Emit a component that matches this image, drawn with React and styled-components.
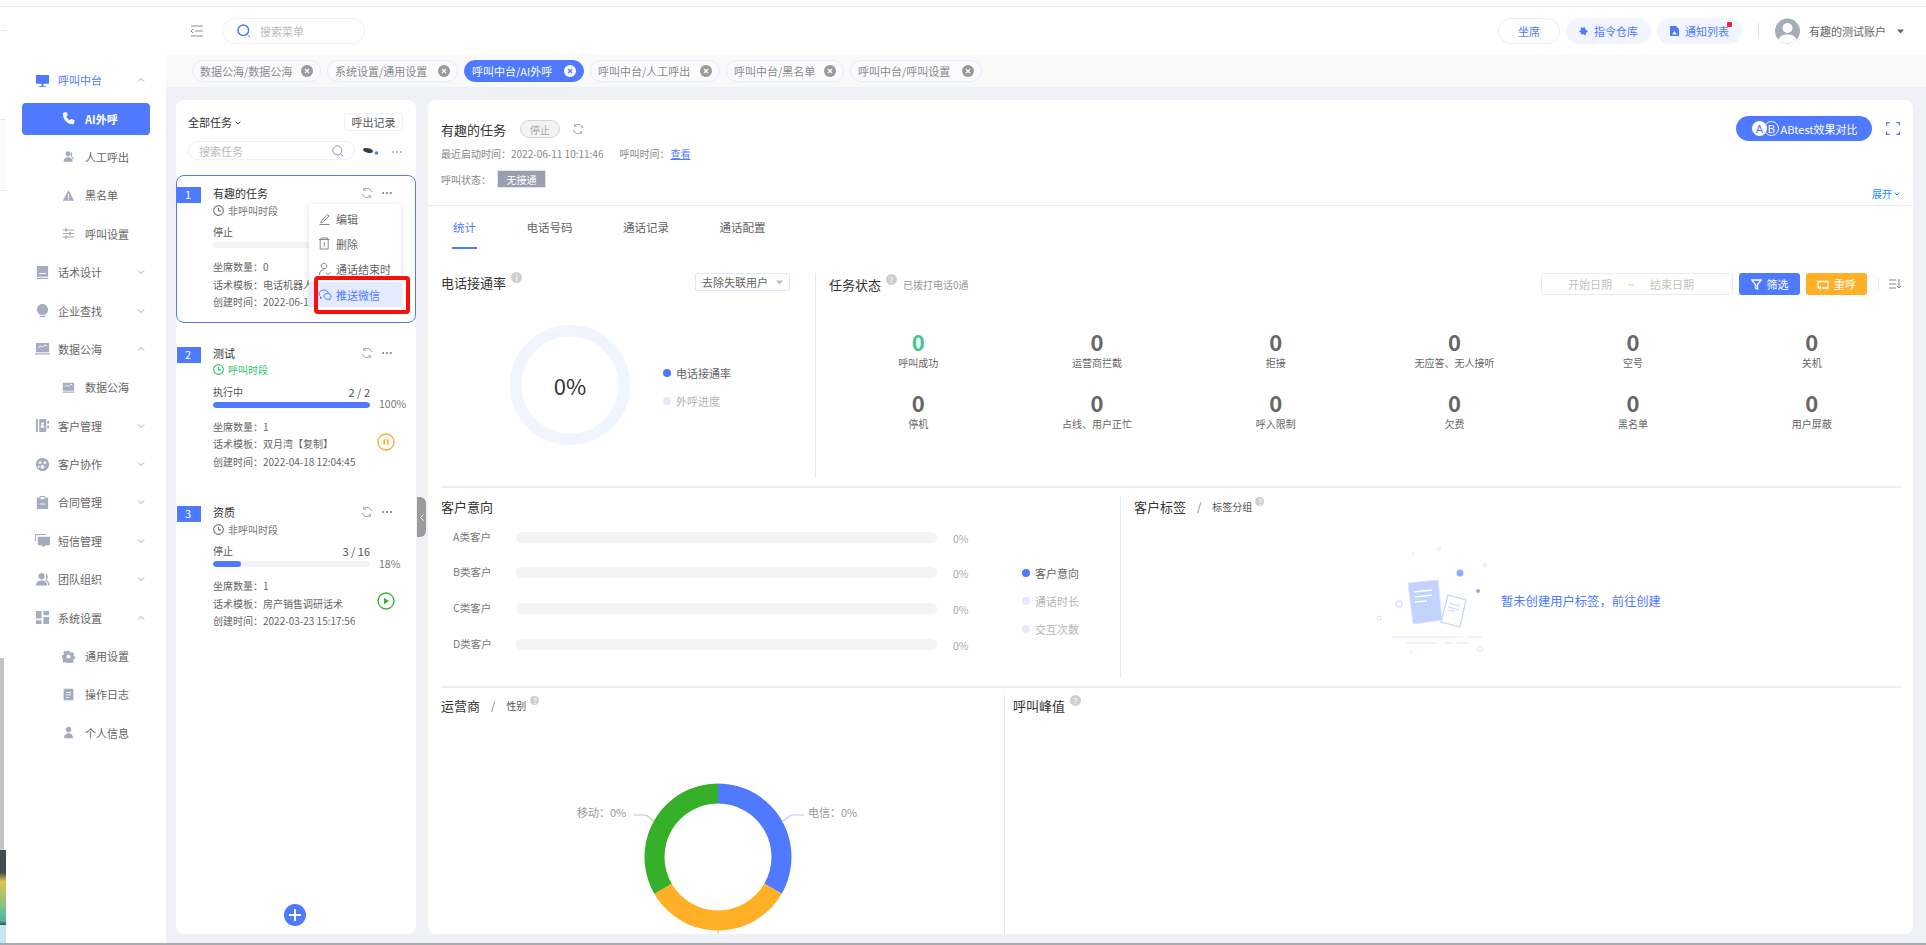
import React from 'react';
import styled, { createGlobalStyle } from 'styled-components';

const BLUE = '#4f7aff';

const GlobalStyle = createGlobalStyle`
    html, body, #root {
        margin: 0;
        padding: 0;
        height: 100%;
    }
    body {
        font-family: "Noto Sans CJK SC", "Noto Sans", "Liberation Sans", sans-serif;
        color: #555;
        background: #fff;
        overflow: hidden;
    }
    * {
        box-sizing: border-box;
    }
`;

const Page = styled.div`
    display: flex;
    flex-direction: column;
    width: 1926px;
    height: 945px;
    overflow: hidden;
`;

const TopEdge = styled.div`
    flex: none;
    height: 7px;
    border-bottom: 1px solid #e6e6e6;
`;

const BottomEdge = styled.div`
    flex: none;
    height: 2px;
    background: #a9adb3;
`;

const Body = styled.div`
    flex: 1;
    display: flex;
    min-height: 0;
`;

const LeftEdge = styled.div`
    flex: none;
    width: 6px;
    display: flex;
    flex-direction: column;
`;

const EdgePiece = styled.div`
    flex: ${(p) => (p.$h ? 'none' : '1')};
    height: ${(p) => (p.$h ? `${p.$h}px` : 'auto')};
    background: ${(p) => p.$bg || '#fff'};
    border-bottom: ${(p) => (p.$line ? '1px solid #e9e9e9' : '0')};
    margin-right: ${(p) => (p.$thin ? '2px' : '0')};
`;

const Sidebar = styled.aside`
    flex: none;
    width: 160px;
    padding-top: 54px;
    background: #fff;
`;

const NavRow = styled.div`
    display: flex;
    align-items: center;
    height: 38.4px;
    padding-left: ${(p) => (p.$sub ? '56px' : '29px')};
    padding-right: 21px;
    font-size: 11px;
    color: ${(p) => (p.$on ? BLUE : '#666')};
    svg.nav-icon {
        flex: none;
        width: ${(p) => (p.$sub ? '13px' : '15px')};
        height: ${(p) => (p.$sub ? '13px' : '15px')};
        margin-right: ${(p) => (p.$sub ? '10px' : '8px')};
    }
`;

const ActiveRow = styled.div`
    display: flex;
    align-items: center;
    height: 32px;
    margin: 3.6px 16px 2.8px;
    padding-left: 39px;
    background: ${BLUE};
    border-radius: 4px;
    color: #fff;
    font-size: 11px;
    font-weight: 700;
    svg {
        width: 15px;
        height: 15px;
        margin-right: 9px;
    }
`;

const Chevron = styled.svg`
    margin-left: auto;
    width: 8px;
    height: 6px;
`;

const Workspace = styled.div`
    flex: 1;
    min-width: 0;
    display: flex;
    flex-direction: column;
`;

const Header = styled.header`
    flex: none;
    height: 48px;
    display: flex;
    align-items: center;
    padding: 0 22px 0 24px;
    background: #fff;
`;

const MenuSearch = styled.div`
    display: flex;
    align-items: center;
    width: 143px;
    height: 26px;
    margin-left: 18px;
    padding-left: 14px;
    border: 1px solid #eef1fb;
    border-radius: 13px;
    font-size: 11px;
    color: #bbb;
    svg {
        margin-right: 9px;
    }
`;

const HeaderRight = styled.div`
    margin-left: auto;
    display: flex;
    align-items: center;
`;

const PillButton = styled.div`
    position: relative;
    display: flex;
    align-items: center;
    justify-content: center;
    gap: 6px;
    width: ${(p) => p.$w}px;
    height: 26px;
    margin-left: 6px;
    border-radius: 13px;
    font-size: 11px;
    color: ${BLUE};
    background: ${(p) => (p.$outline ? '#fff' : '#f2f5ff')};
    border: ${(p) => (p.$outline ? '1px solid #e6ecfb' : '0')};
`;

const RedDot = styled.span`
    position: absolute;
    top: 4px;
    right: 10px;
    width: 5px;
    height: 5px;
    border-radius: 1px;
    background: #ff1f3d;
`;

const HeaderDivider = styled.div`
    width: 1px;
    height: 16px;
    margin: 0 16px;
    background: #e2e2e2;
`;

const Account = styled.div`
    display: flex;
    align-items: center;
    font-size: 11px;
    color: #666;
    span {
        margin: 0 11px 0 9px;
    }
`;

const TabStrip = styled.nav`
    flex: none;
    height: 32px;
    display: flex;
    align-items: center;
    gap: 6px;
    padding-left: 26px;
    background: #f9f9fa;
`;

const PageTab = styled.div`
    display: flex;
    align-items: center;
    justify-content: space-between;
    width: ${(p) => p.$w}px;
    height: 22px;
    padding: 0 7px;
    border-radius: 11px;
    font-size: 11px;
    white-space: nowrap;
    color: ${(p) => (p.$on ? '#fff' : '#8a8a8a')};
    background: ${(p) => (p.$on ? BLUE : '#fbfbfd')};
    border: 1px solid ${(p) => (p.$on ? BLUE : '#e6ecfb')};
`;

const Content = styled.main`
    flex: 1;
    min-height: 0;
    display: flex;
    gap: 12px;
    padding: 13px 13px 9px 10px;
    background: #f0f1f6;
`;

const TaskPanel = styled.section`
    position: relative;
    flex: none;
    width: 240px;
    padding-top: 13px;
    background: #fff;
    border-radius: 8px;
`;

const PanelTop = styled.div`
    display: flex;
    align-items: center;
    justify-content: space-between;
    height: 18px;
    padding: 0 13px 0 12px;
    font-size: 11px;
    color: #333;
    svg {
        margin-left: 3px;
        vertical-align: 2px;
    }
`;

const OutlineButton = styled.div`
    display: flex;
    align-items: center;
    justify-content: center;
    width: 59px;
    height: 18px;
    border: 1px solid #eef1fb;
    border-radius: 3px;
    font-size: 11px;
    color: #555;
`;

const SearchRow = styled.div`
    display: flex;
    align-items: center;
    height: 19px;
    margin-top: 10px;
    padding: 0 14px 0 12px;
`;

const TaskSearch = styled.div`
    display: flex;
    align-items: center;
    justify-content: space-between;
    width: 167px;
    height: 19px;
    padding: 0 10px;
    border: 1px solid #eef1fb;
    border-radius: 10px;
    font-size: 11px;
    color: #bbb;
`;

const CardList = styled.div`
    display: flex;
    flex-direction: column;
    gap: 12px;
    margin-top: 15px;
`;

const Card = styled.article`
    position: relative;
    display: flex;
    align-items: flex-start;
    height: 147.5px;
    padding-top: 10px;
    border: 1px solid ${(p) => (p.$on ? BLUE : 'transparent')};
    border-radius: 8px;
`;

const Badge = styled.div`
    flex: none;
    width: 24px;
    height: 16px;
    margin-top: 1px;
    padding-left: 8px;
    background: ${BLUE};
    color: #fff;
    font-size: 11px;
    line-height: 15px;
`;

const CardBody = styled.div`
    flex: 1;
    min-width: 0;
    margin-left: 12px;
    padding-right: 23px;
`;

const CardTitle = styled.div`
    display: flex;
    align-items: center;
    height: 14px;
    font-size: 11px;
    color: #333;
`;

const CardTools = styled.div`
    margin-left: auto;
    display: flex;
    align-items: center;
    gap: 9px;
`;

const Period = styled.div`
    display: flex;
    align-items: center;
    gap: 4px;
    height: 14px;
    margin-top: 3px;
    font-size: 10px;
    color: ${(p) => (p.$on ? '#30c46f' : '#777')};
`;

const ProgressHead = styled.div`
    display: flex;
    justify-content: space-between;
    width: 157px;
    height: 14px;
    margin-top: 8px;
    font-size: 10px;
    line-height: 14px;
    color: #555;
    em {
        font-style: normal;
        font-size: 11px;
    }
`;

const ProgressRow = styled.div`
    display: flex;
    align-items: center;
    height: 6px;
    margin-top: 3px;
    white-space: nowrap;
    font-size: 10.5px;
    color: #777;
`;

const Track = styled.div`
    flex: none;
    width: 157px;
    height: 6px;
    border-radius: 3px;
    background: #f3f3f3;
    overflow: hidden;
`;

const Fill = styled.div`
    height: 100%;
    border-radius: 3px;
    background: ${BLUE};
`;

const Percent = styled.span`
    margin: -2px 0 0 9px;
`;

const InfoRow = styled.div`
    display: flex;
    justify-content: space-between;
    margin: 10px -3px 0 0;
`;

const InfoLines = styled.div`
    max-width: ${(p) => (p.$clip ? '96px' : 'none')};
    overflow: hidden;
    font-size: 10px;
    line-height: 17.5px;
    color: #666;
    white-space: nowrap;
`;

const RoundAction = styled.div`
    flex: none;
    margin-top: 14px;
    height: 18px;
`;

const Menu = styled.div`
    position: absolute;
    left: 132px;
    top: 28px;
    width: 92px;
    height: 106px;
    padding-top: 2px;
    background: #fff;
    border-radius: 2px;
    box-shadow: 0 1px 6px rgba(60, 70, 100, 0.16);
`;

const MenuItem = styled.div`
    position: relative;
    display: flex;
    align-items: center;
    gap: 4px;
    height: 25.3px;
    padding-left: 9px;
    font-size: 11px;
    white-space: nowrap;
    color: ${(p) => (p.$on ? BLUE : '#666')};
    background: ${(p) => (p.$on ? '#e4ebfe' : 'transparent')};
`;

const RedBox = styled.div`
    position: absolute;
    left: 5px;
    right: -9px;
    top: -6px;
    bottom: -7px;
    border: 4px solid #fa0d0d;
    border-radius: 4px;
`;

const AddButton = styled.div`
    position: absolute;
    left: 108px;
    bottom: 8px;
    width: 22px;
    height: 22px;
    border-radius: 50%;
    background: ${BLUE};
    display: flex;
    align-items: center;
    justify-content: center;
`;

const CollapseHandle = styled.div`
    position: absolute;
    right: -10px;
    top: 397px;
    width: 9px;
    height: 40px;
    background: #9b9b9b;
    border-radius: 0 6px 6px 0;
    display: flex;
    align-items: center;
    justify-content: center;
`;

const MainPanel = styled.section`
    flex: 1;
    min-width: 0;
    background: #fff;
    border-radius: 8px;
    overflow: hidden;
`;

const TaskHead = styled.div`
    display: flex;
    justify-content: space-between;
    height: 106px;
    padding: 16px 13px 4px;
    border-bottom: 1px solid #ebebeb;
`;

const TaskMeta = styled.div`
    padding-top: 4px;
`;

const MetaTitle = styled.div`
    display: flex;
    align-items: center;
    height: 18px;
    font-size: 13px;
    color: #333;
`;

const StopPill = styled.span`
    display: flex;
    align-items: center;
    justify-content: center;
    width: 40px;
    height: 18px;
    margin: 0 12px 0 14px;
    border: 1px solid #d4d4d4;
    border-radius: 9px;
    background: #f3f3f3;
    font-size: 10px;
    color: #aaa;
`;

const MetaLine = styled.div`
    display: flex;
    align-items: center;
    margin-top: ${(p) => p.$mt}px;
    height: ${(p) => p.$h}px;
    font-size: 10px;
    color: #888;
    a {
        margin-left: 1px;
        color: ${BLUE};
        text-decoration: underline;
    }
    b {
        margin-left: 16px;
        font-weight: 400;
    }
`;

const StateTag = styled.span`
    display: flex;
    align-items: center;
    justify-content: center;
    width: 49px;
    height: 18px;
    margin-left: 6px;
    background: #9a9fb0;
    border: 1px solid #e5e5e5;
    font-size: 10px;
    color: #fff;
`;

const HeadRight = styled.div`
    display: flex;
    flex-direction: column;
    align-items: flex-end;
    justify-content: space-between;
`;

const AbRow = styled.div`
    display: flex;
    align-items: center;
    gap: 14px;
`;

const AbButton = styled.div`
    display: flex;
    align-items: center;
    justify-content: center;
    gap: 1px;
    width: 136px;
    height: 25px;
    border-radius: 13px;
    background: ${BLUE};
    color: #fff;
    font-size: 11px;
`;

const ExpandLink = styled.div`
    display: flex;
    align-items: center;
    gap: 2px;
    font-size: 10px;
    line-height: 14px;
    color: #1890ff;
`;

const Tabs = styled.div`
    display: flex;
    gap: 48.5px;
    height: 43px;
    padding-left: 24px;
`;

const TabItem = styled.div`
    height: 43px;
    padding: 14px 1px 0;
    font-size: 11.5px;
    line-height: 14px;
    color: ${(p) => (p.$on ? BLUE : '#666')};
    border-bottom: 2px solid ${(p) => (p.$on ? BLUE : 'transparent')};
`;

const Band = styled.div`
    display: flex;
    height: ${(p) => p.$h}px;
    padding-top: ${(p) => p.$pt}px;
    padding-bottom: ${(p) => p.$pb}px;
    margin: 0 12px 0 13px;
    border-bottom: ${(p) => (p.$last ? '0' : '2px solid #eceef0')};
`;

const Column = styled.div`
    flex: ${(p) => (p.$w ? 'none' : '1')};
    width: ${(p) => (p.$w ? `${p.$w}px` : 'auto')};
    min-width: 0;
    padding-left: ${(p) => p.$pl || 0}px;
    padding-right: ${(p) => p.$pr || 0}px;
    border-right: ${(p) => (p.$line ? '1px solid #e8e8e8' : '0')};
`;

const BlockHead = styled.div`
    display: flex;
    align-items: center;
    justify-content: ${(p) => (p.$start ? 'flex-start' : 'space-between')};
    height: ${(p) => p.$h || 20}px;
`;

const TitleGroup = styled.div`
    display: flex;
    align-items: center;
    font-size: 13px;
    color: #333;
    white-space: nowrap;
`;

const Slash = styled.span`
    margin: 0 11px;
    font-size: 11px;
    color: #777;
`;

const SubTitle = styled.span`
    font-size: 10px;
    color: ${(p) => (p.$light ? '#999' : '#555')};
    margin-left: ${(p) => p.$ml || 0}px;
`;

const Help = styled.span`
    display: inline-flex;
    align-items: center;
    justify-content: center;
    width: ${(p) => p.$s || 11}px;
    height: ${(p) => p.$s || 11}px;
    margin: -9px 0 0 ${(p) => p.$ml || 5}px;
    border-radius: 50%;
    background: #cfcfcf;
    color: #fff;
    font-size: 8px;
    line-height: 1;
`;

const SelectBox = styled.div`
    display: flex;
    align-items: center;
    justify-content: space-between;
    width: 95px;
    height: 18px;
    padding: 0 6px;
    border: 1px solid #dfe6fb;
    border-radius: 2px;
    font-size: 11px;
    color: #666;
`;

const RingRow = styled.div`
    display: flex;
    align-items: center;
    margin: 34px 0 0 69px;
    svg {
        flex: none;
    }
`;

const Legend = styled.div`
    display: flex;
    flex-direction: column;
    gap: 14px;
    margin-left: ${(p) => p.$ml}px;
    margin-top: ${(p) => p.$mt}px;
`;

const LegendItem = styled.div`
    display: flex;
    align-items: center;
    gap: 5px;
    height: 14px;
    font-size: 11px;
    white-space: nowrap;
    color: ${(p) => (p.$on ? '#666' : '#b3b3b3')};
    &::before {
        content: '';
        width: 8px;
        height: 8px;
        border-radius: 50%;
        background: ${(p) => (p.$on ? BLUE : '#e4ebfe')};
    }
`;

const Tools = styled.div`
    display: flex;
    align-items: center;
    gap: 6px;
`;

const DateRange = styled.div`
    display: flex;
    align-items: center;
    justify-content: space-between;
    width: 192px;
    height: 22px;
    padding: 0 38px 0 26px;
    border: 1px solid #e4ebfb;
    border-radius: 3px;
    font-size: 11px;
    color: #c2c2c2;
`;

const ToolButton = styled.div`
    display: flex;
    align-items: center;
    justify-content: center;
    gap: 5px;
    width: 61px;
    height: 22px;
    border-radius: 3px;
    background: ${(p) => p.$bg};
    color: #fff;
    font-size: 11px;
`;

const ToolDivider = styled.div`
    width: 1px;
    height: 14px;
    margin: 0 4px 0 5px;
    background: #e5e5e5;
`;

const StatGrid = styled.div`
    display: grid;
    grid-template-columns: repeat(6, 178.7px);
    row-gap: 21px;
    margin-top: 34px;
`;

const Stat = styled.div`
    height: 40px;
    text-align: center;
    white-space: nowrap;
`;

const StatValue = styled.div`
    height: 24px;
    font-size: 22px;
    line-height: 24px;
    font-weight: 700;
    color: ${(p) => (p.$on ? '#3ec78f' : '#666')};
`;

const StatLabel = styled.div`
    margin-top: 3px;
    font-size: 10px;
    line-height: 14px;
    color: #666;
`;

const BarsWrap = styled.div`
    display: flex;
    margin-top: 11px;
`;

const Bars = styled.div`
    display: flex;
    flex-direction: column;
    gap: 15.7px;
`;

const BarRow = styled.div`
    display: flex;
    align-items: center;
    height: 20px;
    padding-left: 12px;
`;

const BarLabel = styled.div`
    width: 63px;
    font-size: 10.5px;
    color: #777;
    margin-top: -2px;
`;

const BarTrack = styled.div`
    width: 421px;
    height: 11px;
    border-radius: 6px;
    background: #f4f4f4;
`;

const BarValue = styled.div`
    width: 32px;
    margin: 2px 0 0 16px;
    font-size: 10.5px;
    color: #aaa;
`;

const EmptyState = styled.div`
    display: flex;
    align-items: center;
    margin: 22px 0 0 236px;
    font-size: 12.3px;
    color: ${BLUE};
    white-space: nowrap;
    svg {
        flex: none;
        margin-right: 1px;
    }
`;

const Monitor = () => (
    <svg className="nav-icon" viewBox="0 0 16 16">
        <path fill="currentColor" d="M1 2h14v9.500H1zM7 11.500h2V14h3v1H4v-1h3z" />
    </svg>
);
const GrayIcon = ({ d }) => (
    <svg className="nav-icon" viewBox="0 0 16 16">
        <path fill="#a6acbf" fillRule="evenodd" d={d} />
    </svg>
);

const ICONS = {
    book: 'M2 1h12v14H2zM4.500 8.500v1h7v-1zM2 12.500h12v1H2z',
    bulb: 'M8 1a6 6 0 0 1 3.500 10.800V12.500h-7v-.7A6 6 0 0 1 8 1zM5 13.500h6V15H5z',
    chart: 'M1 2h14v10H1zM3 8l2.500-2.500L8 7l3-2.500 2 1.500v-1L11 3.500 8 6 5.500 4.500 3 7zM0 13h16v1.500H0z',
    folder: 'M1 1h2v14H1zM4.500 1H12v14H4.500zM8 4.500a1.500 1.500 0 1 0 .01 0zM6 10.500h4V9.500a2 2 0 0 0-4 0zM13 3h2v3h-2zM13 8h2v3h-2z',
    team: 'M8 1a7 7 0 1 1-.01 0zM5.500 4.500a1.500 1.500 0 1 0 .01 0zM10.500 4.500a1.500 1.500 0 1 0 .01 0zM8 8.500a2 2 0 1 0 .01 0zM4 9.500a1 1 0 1 0 .01 0z',
    clip: 'M2 3h3V1h6v2h3v12H2zM6 2v2.500h4V2zM5 9h6v1H5z',
    sms: 'M0 1h12v1H1v7H0zM3 4h13v9h-5l-2 2-2-2H3z',
    people: 'M7 1a3.500 3.500 0 1 1-.01 0zM1 14.500c0-3.500 2.500-5.500 6-5.500s6 2 6 5.500zM11 1.500a3.500 3.500 0 0 1 1 6.500c2 1 3.500 3 3.500 6.500H14c0-2.500-1-4.500-3-5.500 1-1.500 1.500-5 0-7.500z',
    grid: 'M1 1h6v8H1zM9 1h6v4.500H9zM9 7.500h6V15H9zM1 11h6v4H1z',
    agent: 'M7.500 1.500a3.200 3.200 0 1 1-.01 0zM2 14.500c0-3.500 2-5.500 5.500-5.500s5.500 2 5.500 5.500zM11 2.500a3 3 0 0 1 .5 5 5 5 0 0 1 3 4.500h-1c-.5-2.500-2-3.500-3-4 .8-1.500.8-3.500.5-5.500z',
    warn: 'M8 1.500l7 13H1zM7.300 6v5h1.400V6zM7.300 12v1.300h1.400V12z',
    sliders: 'M1 3h3V1.500h2V3h9v1.300H6v1.200H4V4.300H1zM1 7.400h8V6h2v1.400h4v1.300h-4V10H9V8.700H1zM1 11.800h3v-1.300h2v1.300h9V13H6v1.500H4V13H1z',
    screen: 'M1 2h14v10H1zM3 8l2.500-2.500L8 7l3-2.500 2 1.500v-1L11 3.500 8 6 5.500 4.500 3 7zM1 13h14v1.500H1z',
    gear: 'M6.500 1h3l.4 1.800 1.600.7 1.600-1 2 2-1 1.600.7 1.600 1.200.3v3l-1.800.4-.7 1.600 1 1.600-2 2-1.600-1-1.600.7-.4 1.200h-3l-.4-1.800-1.600-.7-1.600 1-2-2 1-1.600-.7-1.600L0 9.500v-3l1.800-.4.7-1.600-1-1.600 2-2 1.600 1 1.600-.7zM8 5.500a2.500 2.500 0 1 0 .01 0z',
    log: 'M2 1h12v14H2zM5 5v1h6V5zM5 8v1h6V8zM5 11v1h4v-1z',
    person: 'M8 1a3.500 3.500 0 1 1-.01 0zM2.500 15c0-4 2-6 5.500-6s5.500 2 5.500 6z'
};

const NAV = [
    { label: '人工呼出', icon: 'agent', sub: true },
    { label: '黑名单', icon: 'warn', sub: true },
    { label: '呼叫设置', icon: 'sliders', sub: true },
    { label: '话术设计', icon: 'book' },
    { label: '企业查找', icon: 'bulb' },
    { label: '数据公海', icon: 'chart', open: true },
    { label: '数据公海', icon: 'screen', sub: true },
    { label: '客户管理', icon: 'folder' },
    { label: '客户协作', icon: 'team' },
    { label: '合同管理', icon: 'clip' },
    { label: '短信管理', icon: 'sms' },
    { label: '团队组织', icon: 'people' },
    { label: '系统设置', icon: 'grid', open: true },
    { label: '通用设置', icon: 'gear', sub: true },
    { label: '操作日志', icon: 'log', sub: true },
    { label: '个人信息', icon: 'person', sub: true }
];

const ChevronMark = ({ up }) => (
    <Chevron viewBox="0 0 8 6">
        <path
            d={up ? 'M1 4.500L4 1.500l3 3' : 'M1 1.500L4 4.500l3-3'}
            fill="none"
            stroke="#a8a8a8"
            strokeWidth="1"
        />
    </Chevron>
);

const PhoneIcon = () => (
    <svg viewBox="0 0 16 16">
        <path
            fill="#fff"
            d="M3 1.500l2.800-.5 1.500 3.500-1.600 1.400c.7 1.700 2 3 3.800 3.900l1.500-1.600 3.500 1.600-.5 2.900c-.2.800-.8 1.300-1.600 1.300C7 14 2 9 2 3.100c0-.8.300-1.400 1-1.600z"
        />
    </svg>
);

const RefreshIcon = ({ size = 12 }) => (
    <svg width={size} height={size} viewBox="0 0 12 12" fill="none" stroke="#a5a5a5" strokeWidth="1">
        <path d="M10.700 5A4.800 4.800 0 0 0 2.300 3M1.300 7a4.800 4.800 0 0 0 8.400 2" />
        <path d="M2.600 .9v2.300h2.200M9.400 11V8.800H7.200" />
    </svg>
);

const DotsIcon = ({ color = '#777' }) => (
    <svg width="10" height="4" viewBox="0 0 10 4">
        <g fill={color}>
            <circle cx="1.200" cy="2" r="1" />
            <circle cx="5" cy="2" r="1" />
            <circle cx="8.800" cy="2" r="1" />
        </g>
    </svg>
);

const ClockIcon = ({ color }) => (
    <svg width="11" height="11" viewBox="0 0 10 10" fill="none" stroke={color} strokeWidth="1">
        <circle cx="5" cy="5" r="4.400" />
        <path d="M5 2.500V5.300h2.300" />
    </svg>
);

const SearchIcon = ({ size, color, w = 1.500 }) => (
    <svg width={size} height={size} viewBox="0 0 14 14" fill="none" stroke={color} strokeWidth={w}>
        <circle cx="6.300" cy="6.300" r="5.300" />
        <path d="M10.200 10.400l2.800 2.800" stroke={BLUE} strokeWidth="1" />
    </svg>
);

const CloseDot = ({ on }) => (
    <svg width="12" height="12" viewBox="0 0 12 12">
        <circle cx="6" cy="6" r="6" fill={on ? '#fff' : '#9a9a9a'} />
        <path d="M4 4l4 4M8 4l-4 4" stroke={on ? BLUE : '#fff'} strokeWidth="1.200" />
    </svg>
);

const PauseIcon = () => (
    <svg width="18" height="18" viewBox="0 0 18 18" fill="none">
        <circle cx="9" cy="9" r="8" stroke="#ffa726" strokeWidth="1.300" />
        <path d="M7.300 6.300v5.400M10.700 6.300v5.400" stroke="#ffa726" strokeWidth="1.700" />
    </svg>
);

const PlayIcon = () => (
    <svg width="18" height="18" viewBox="0 0 18 18" fill="none">
        <circle cx="9" cy="9" r="8" stroke="#36b029" strokeWidth="1.300" />
        <path d="M7 5.800l5 3.200-5 3.200z" fill="#36b029" />
    </svg>
);

const MenuIcon = ({ kind }) => {
    const paths = {
        edit: <path d="M1.500 12.500h10M3 9.500l6.500-7 1.500 1.500L4.500 10.500 2.800 11z" />,
        trash: <path d="M1 2.500h10.500M3 2.500V1h6.500v1.500M2.200 2.500v9.500h8V2.500M6.200 5v4.500" />,
        user: <path d="M6 1.200a2.800 2.800 0 1 1-.01 0zM1.500 13c0-3.500 1.800-5.200 4.500-5.200M8 11l2 1.500 2.500-2" />,
        wechat: (
            <>
                <path d="M10.500 5.500C10 3.300 8.200 2 6 2 3.200 2 1 3.800 1 6c0 1.200.7 2.300 1.700 3l-.3 1.500L4 9.700" />
                <path d="M9.500 5.300c2 0 3.500 1.300 3.500 3 0 1-.5 1.700-1.200 2.300l.2 1.400-1.400-.9c-2.500.5-4.600-.9-4.600-2.800 0-1.700 1.500-3 3.500-3z" />
            </>
        )
    };
    return (
        <svg width="14" height="14" viewBox="0 0 14 14" fill="none" stroke={kind === 'wechat' ? BLUE : '#888'} strokeWidth="1">
            {paths[kind]}
        </svg>
    );
};

const Ring = () => (
    <svg width="120" height="120" viewBox="0 0 120 120">
        <circle cx="60" cy="60" r="54.250" fill="none" stroke="#f1f5ff" strokeWidth="11.500" />
        <text
            x="60"
            y="70"
            textAnchor="middle"
            fontSize="22"
            fill="#333"
            fontFamily="'Noto Sans CJK SC', sans-serif"
        >
            0%
        </text>
    </svg>
);

const Illustration = () => (
    <svg width="130" height="125" viewBox="0 0 130 125">
        <g fill="#eef2fd">
            <circle cx="69" cy="11" r="2.500" />
            <circle cx="43" cy="15" r="1.500" />
            <circle cx="115" cy="27" r="2.500" />
            <circle cx="41" cy="114" r="1.500" />
        </g>
        <circle cx="90" cy="35" r="3.500" fill="#8fadfb" />
        <circle cx="108" cy="53" r="2" fill="#8fadfb" />
        <g fill="none" stroke="#d8e2fd">
            <circle cx="29" cy="66" r="3" strokeWidth="1.300" />
            <circle cx="9" cy="80" r="2" />
            <circle cx="110" cy="111" r="2.300" />
        </g>
        <path d="M38 45l30-3 4 40-29 4z" fill="#c2d3fd" stroke="#dbe5fe" strokeWidth="1" />
        <path d="M44 54l18-2M45 59l17-2M45 64l12-1" stroke="#fff" strokeWidth="1.300" />
        <path d="M78 57l18 5-6 27-19-5z" fill="#fff" stroke="#c2d3fd" strokeWidth="1.200" />
        <path d="M79 65l11 3M78 69l11 3M78 72l6 1" stroke="#c2d3fd" strokeWidth="1" />
        <path d="M22 99h71M98 99h14M36 105h32M75 105h8M86 105h13" stroke="#eef2fd" strokeWidth="2" />
    </svg>
);

const arc = (from, to, cx, cy, ro, ri) => {
    const pt = (a, r) => {
        const t = ((a - 90) * Math.PI) / 180;
        return `${(cx + r * Math.cos(t)).toFixed(2)} ${(cy + r * Math.sin(t)).toFixed(2)}`;
    };
    return `M${pt(from, ro)}A${ro} ${ro} 0 0 1 ${pt(to, ro)}L${pt(to, ri)}A${ri} ${ri} 0 0 0 ${pt(from, ri)}Z`;
};

const CarrierChart = () => (
    <svg width="563" height="219" viewBox="0 0 563 219" style={{ display: 'block' }}>
        <path d={arc(0, 120, 277, 142, 73.500, 53.500)} fill={BLUE} />
        <path d={arc(120, 240, 277, 142, 73.500, 53.500)} fill="#ffb026" />
        <path d={arc(240, 360, 277, 142, 73.500, 53.500)} fill="#36b029" />
        <path d="M342 106l8-6h13" fill="none" stroke="#b5c8ff" strokeWidth="1.200" />
        <path d="M213 106l-8-6h-12" fill="none" stroke="#a5dca0" strokeWidth="1.200" />
        <path d="M277 215.500v3.500" stroke="#ffb026" />
        <g fontSize="11" fill="#999" fontFamily="'Noto Sans CJK SC', sans-serif">
            <text x="367" y="102">电信：0%</text>
            <text x="136" y="102">移动：0%</text>
        </g>
    </svg>
);

const STATS = [
    ['呼叫成功', true],
    ['运营商拦截'],
    ['拒接'],
    ['无应答、无人接听'],
    ['空号'],
    ['关机'],
    ['停机'],
    ['占线、用户正忙'],
    ['呼入限制'],
    ['欠费'],
    ['黑名单'],
    ['用户屏蔽']
];

const TASKS = [
    {
        id: 1,
        name: '有趣的任务',
        period: '非呼叫时段',
        state: '停止',
        rate: 0,
        seats: 0,
        script: '电话机器人',
        time: '2022-06-11 10:11:46'
    },
    {
        id: 2,
        name: '测试',
        period: '呼叫时段',
        on: true,
        state: '执行中',
        count: '2 / 2',
        rate: 100,
        seats: 1,
        script: '双月湾【复制】',
        time: '2022-04-18 12:04:45'
    },
    {
        id: 3,
        name: '资质',
        period: '非呼叫时段',
        state: '停止',
        count: '3 / 16',
        rate: 18,
        seats: 1,
        script: '房产销售调研话术',
        time: '2022-03-23 15:17:56'
    }
];

const PAGE_TABS = [
    ['数据公海/数据公海', 129],
    ['系统设置/通用设置', 131],
    ['呼叫中台/AI外呼', 120, true],
    ['呼叫中台/人工呼出', 130],
    ['呼叫中台/黑名单', 118],
    ['呼叫中台/呼叫设置', 132]
];

const TaskCard = ({ task, selected }) => (
    <Card $on={selected}>
        <Badge>{task.id}</Badge>
        <CardBody>
            <CardTitle>
                {task.name}
                <CardTools>
                    <RefreshIcon />
                    <DotsIcon />
                </CardTools>
            </CardTitle>
            <Period $on={task.on}>
                <ClockIcon color={task.on ? '#30c46f' : '#777'} />
                {task.period}
            </Period>
            <ProgressHead>
                {task.state}
                {!selected && <em>{task.count}</em>}
            </ProgressHead>
            <ProgressRow>
                <Track>
                    <Fill style={{ width: `${task.rate}%` }} />
                </Track>
                {!selected && <Percent>{task.rate}%</Percent>}
            </ProgressRow>
            <InfoRow>
                <InfoLines $clip={selected}>
                    <div>坐席数量：{task.seats}</div>
                    <div>话术模板：{task.script}</div>
                    <div>创建时间：{task.time}</div>
                </InfoLines>
                {!selected && (
                    <RoundAction>{task.on ? <PauseIcon /> : <PlayIcon />}</RoundAction>
                )}
            </InfoRow>
        </CardBody>
        {selected && (
            <Menu>
                <MenuItem>
                    <MenuIcon kind="edit" />
                    编辑
                </MenuItem>
                <MenuItem>
                    <MenuIcon kind="trash" />
                    删除
                </MenuItem>
                <MenuItem>
                    <MenuIcon kind="user" />
                    通话结束时
                </MenuItem>
                <MenuItem $on>
                    <MenuIcon kind="wechat" />
                    推送微信
                    <RedBox />
                </MenuItem>
            </Menu>
        )}
    </Card>
);

export default function App() {
    return (
        <>
            <GlobalStyle />
            <Page>
                <TopEdge />
                <Body>
                    <LeftEdge>
                        <EdgePiece $h={24} $line />
                        <EdgePiece $h={89} $line />
                        <EdgePiece $h={71} $bg="#fbfbfb" $line />
                        <EdgePiece $h={467} />
                        <EdgePiece $h={192} $bg="#c4c4c4" $thin />
                        <EdgePiece $h={75} $bg="linear-gradient(#454a55 0 30%, #d8c64f 42%, #8cc47f 72%, #4fb8a8 94%, #454a55 100%)" />
                        <EdgePiece $bg="#c9e6ee" />
                    </LeftEdge>
                    <Sidebar>
                        <NavRow $on>
                            <Monitor />
                            呼叫中台
                            <ChevronMark up />
                        </NavRow>
                        <ActiveRow>
                            <PhoneIcon />
                            AI外呼
                        </ActiveRow>
                        {NAV.map((item, i) => (
                            <NavRow key={i} $sub={item.sub}>
                                <GrayIcon d={ICONS[item.icon]} />
                                {item.label}
                                {!item.sub && <ChevronMark up={item.open} />}
                            </NavRow>
                        ))}
                    </Sidebar>
                    <Workspace>
                        <Header>
                            <svg width="14" height="12" viewBox="0 0 14 12" fill="none" stroke="#8a8f9c" strokeWidth="1">
                                <path d="M1 1h12M5 6h8M1 11h12M3 4L1 6l2 2" />
                            </svg>
                            <MenuSearch>
                                <SearchIcon size={14} color={BLUE} />
                                搜索菜单
                            </MenuSearch>
                            <HeaderRight>
                                <PillButton $w={62} $outline>坐席</PillButton>
                                <PillButton $w={85}>
                                    <svg width="9" height="9" viewBox="0 0 10 10">
                                        <path fill={BLUE} d="M2 0l2 1 2-1 1.500 3L10 4.500 8 6.500l-1 3-2.500-2L3 9 2 6.500 0 5l2-1.500z" />
                                    </svg>
                                    指令仓库
                                </PillButton>
                                <PillButton $w={85}>
                                    <svg width="9" height="10" viewBox="0 0 9 10">
                                        <path fill={BLUE} d="M0 0h6l3 3v7H0zM4.500 5L2 8.500h5z" fillRule="evenodd" />
                                    </svg>
                                    通知列表
                                    <RedDot />
                                </PillButton>
                                <HeaderDivider />
                                <Account>
                                    <svg width="25" height="26" viewBox="0 0 25 26">
                                        <circle cx="12.500" cy="13" r="12.500" fill="#a7acba" />
                                        <circle cx="12.500" cy="10" r="5" fill="#fff" />
                                        <path d="M3.500 21.500c1.500-4 5-5 9-5s7.500 1 9 5a12.500 12.500 0 0 1-18 0z" fill="#fff" />
                                    </svg>
                                    <span>有趣的测试账户</span>
                                    <svg width="7" height="5" viewBox="0 0 7 5">
                                        <path d="M0 .5h7L3.500 4.500z" fill="#666" />
                                    </svg>
                                </Account>
                            </HeaderRight>
                        </Header>
                        <TabStrip>
                            {PAGE_TABS.map(([label, w, on]) => (
                                <PageTab key={label} $w={w} $on={on}>
                                    {label}
                                    <CloseDot on={on} />
                                </PageTab>
                            ))}
                        </TabStrip>
                        <Content>
                            <TaskPanel>
                                <PanelTop>
                                    <span>
                                        全部任务
                                        <svg width="6" height="4" viewBox="0 0 6 4" fill="none" stroke="#555">
                                            <path d="M.5.500L3 3 5.500.500" />
                                        </svg>
                                    </span>
                                    <OutlineButton>呼出记录</OutlineButton>
                                </PanelTop>
                                <SearchRow>
                                    <TaskSearch>
                                        搜索任务
                                        <SearchIcon size={12} color="#888" w={1} />
                                    </TaskSearch>
                                    <svg width="16" height="10" viewBox="0 0 16 10" style={{ marginLeft: 8 }}>
                                        <ellipse cx="5" cy="4.500" rx="5" ry="2.200" transform="rotate(14 5 4.500)" fill="#3a3d44" />
                                        <circle cx="13.500" cy="7" r="1.800" fill={BLUE} />
                                    </svg>
                                    <span style={{ marginLeft: 'auto', lineHeight: 0 }}>
                                        <DotsIcon color="#aaa" />
                                    </span>
                                </SearchRow>
                                <CardList>
                                    {TASKS.map((t) => (
                                        <TaskCard key={t.id} task={t} selected={t.id === 1} />
                                    ))}
                                </CardList>
                                <AddButton>
                                    <svg width="12" height="12" viewBox="0 0 12 12">
                                        <path d="M6 0v12M0 6h12" stroke="#fff" strokeWidth="2" />
                                    </svg>
                                </AddButton>
                                <CollapseHandle>
                                    <svg width="4" height="7" viewBox="0 0 4 7" fill="none" stroke="#fff">
                                        <path d="M3.500.500l-3 3 3 3" />
                                    </svg>
                                </CollapseHandle>
                            </TaskPanel>
                            <MainPanel>
                                <TaskHead>
                                    <TaskMeta>
                                        <MetaTitle>
                                            有趣的任务
                                            <StopPill>停止</StopPill>
                                            <RefreshIcon />
                                        </MetaTitle>
                                        <MetaLine $mt={8} $h={14}>
                                            最近启动时间：2022-06-11 10:11:46
                                            <b>呼叫时间：</b>
                                            <a>查看</a>
                                        </MetaLine>
                                        <MetaLine $mt={10} $h={18}>
                                            呼叫状态：
                                            <StateTag>无接通</StateTag>
                                        </MetaLine>
                                    </TaskMeta>
                                    <HeadRight>
                                        <AbRow>
                                            <AbButton>
                                                <svg width="29" height="17" viewBox="0 0 29 17">
                                                    <circle cx="8.500" cy="8.500" r="7.500" fill="#fff" />
                                                    <circle cx="20.500" cy="8.500" r="7" fill="none" stroke="#fff" />
                                                    <text x="8.500" y="12.500" textAnchor="middle" fontSize="11" fill={BLUE} fontFamily="'Liberation Sans', sans-serif">A</text>
                                                    <text x="20.500" y="12.500" textAnchor="middle" fontSize="11" fill="#fff" fontFamily="'Liberation Sans', sans-serif">B</text>
                                                </svg>
                                                ABtest效果对比
                                            </AbButton>
                                            <svg width="14" height="13" viewBox="0 0 14 13" fill="none" stroke={BLUE} strokeWidth="1.200">
                                                <path d="M.6 3.500V.6h3M10.400.6h3v2.900M13.400 9.500v2.900h-3M3.600 12.400h-3V9.500" />
                                            </svg>
                                        </AbRow>
                                        <ExpandLink>
                                            展开
                                            <svg width="6" height="4" viewBox="0 0 6 4" fill="none" stroke="#1890ff">
                                                <path d="M.5.500L3 3 5.500.500" />
                                            </svg>
                                        </ExpandLink>
                                    </HeadRight>
                                </TaskHead>
                                <Tabs>
                                    <TabItem $on>统计</TabItem>
                                    <TabItem>电话号码</TabItem>
                                    <TabItem>通话记录</TabItem>
                                    <TabItem>通话配置</TabItem>
                                </Tabs>
                                <Band $h={239} $pt={24} $pb={8}>
                                    <Column $w={375} $pr={25} $line>
                                        <BlockHead $h={18}>
                                            <TitleGroup>
                                                电话接通率
                                                <Help $ml={5}>i</Help>
                                            </TitleGroup>
                                            <SelectBox>
                                                去除失联用户
                                                <svg width="7" height="5" viewBox="0 0 7 5">
                                                    <path d="M0 .5h7L3.500 4.500z" fill="#bbb" />
                                                </svg>
                                            </SelectBox>
                                        </BlockHead>
                                        <RingRow>
                                            <Ring />
                                            <Legend $ml={33} $mt={4}>
                                                <LegendItem $on>电话接通率</LegendItem>
                                                <LegendItem>外呼进度</LegendItem>
                                            </Legend>
                                        </RingRow>
                                    </Column>
                                    <Column $pl={13}>
                                        <BlockHead $h={22}>
                                            <TitleGroup>
                                                任务状态
                                                <Help $ml={5}>?</Help>
                                                <SubTitle $light $ml={6}>已拨打电话0通</SubTitle>
                                            </TitleGroup>
                                            <Tools>
                                                <DateRange>
                                                    <span>开始日期</span>
                                                    <span>~</span>
                                                    <span>结束日期</span>
                                                </DateRange>
                                                <ToolButton $bg={BLUE}>
                                                    <svg width="11" height="11" viewBox="0 0 11 11" fill="none" stroke="#fff" strokeWidth="1.300">
                                                        <path d="M.8 1h9.400L6.500 5.500V10L4.500 9V5.500z" />
                                                    </svg>
                                                    筛选
                                                </ToolButton>
                                                <ToolButton $bg="#ffb026">
                                                    <svg width="12" height="11" viewBox="0 0 12 11" fill="none" stroke="#fff" strokeWidth="1.300">
                                                        <path d="M2.500 9H1V2.500h10V9H5M4 7.500L2.500 9 4 10.500" />
                                                    </svg>
                                                    重呼
                                                </ToolButton>
                                                <ToolDivider />
                                                <svg width="12" height="10" viewBox="0 0 12 10" fill="none" stroke="#888" strokeWidth="1">
                                                    <path d="M0 1h7M0 5h7M0 9h7M10 0v9M8 7l2 2 2-2" />
                                                </svg>
                                            </Tools>
                                        </BlockHead>
                                        <StatGrid>
                                            {STATS.map(([label, on]) => (
                                                <Stat key={label}>
                                                    <StatValue $on={on}>0</StatValue>
                                                    <StatLabel>{label}</StatLabel>
                                                </Stat>
                                            ))}
                                        </StatGrid>
                                    </Column>
                                </Band>
                                <Band $h={200} $pt={8} $pb={8}>
                                    <Column $w={680} $line>
                                        <BlockHead>
                                            <TitleGroup>客户意向</TitleGroup>
                                        </BlockHead>
                                        <BarsWrap>
                                            <Bars>
                                                {['A', 'B', 'C', 'D'].map((k) => (
                                                    <BarRow key={k}>
                                                        <BarLabel>{k}类客户</BarLabel>
                                                        <BarTrack />
                                                        <BarValue>0%</BarValue>
                                                    </BarRow>
                                                ))}
                                            </Bars>
                                            <Legend $ml={37} $mt={39}>
                                                <LegendItem $on>客户意向</LegendItem>
                                                <LegendItem>通话时长</LegendItem>
                                                <LegendItem>交互次数</LegendItem>
                                            </Legend>
                                        </BarsWrap>
                                    </Column>
                                    <Column $pl={13}>
                                        <BlockHead $start>
                                            <TitleGroup>
                                                客户标签
                                                <Slash>/</Slash>
                                                <SubTitle>标签分组</SubTitle>
                                                <Help $s={9} $ml={3}>?</Help>
                                            </TitleGroup>
                                        </BlockHead>
                                        <EmptyState>
                                            <Illustration />
                                            暂未创建用户标签，前往创建
                                        </EmptyState>
                                    </Column>
                                </Band>
                                <Band $h={246} $pt={7} $pb={0} $last>
                                    <Column $w={564} $line>
                                        <BlockHead $start>
                                            <TitleGroup>
                                                运营商
                                                <Slash>/</Slash>
                                                <SubTitle>性别</SubTitle>
                                                <Help $s={9} $ml={4}>?</Help>
                                            </TitleGroup>
                                        </BlockHead>
                                        <CarrierChart />
                                    </Column>
                                    <Column $pl={8}>
                                        <BlockHead $start>
                                            <TitleGroup>
                                                呼叫峰值
                                                <Help $ml={5}>?</Help>
                                            </TitleGroup>
                                        </BlockHead>
                                    </Column>
                                </Band>
                            </MainPanel>
                        </Content>
                    </Workspace>
                </Body>
                <BottomEdge />
            </Page>
        </>
    );
}
